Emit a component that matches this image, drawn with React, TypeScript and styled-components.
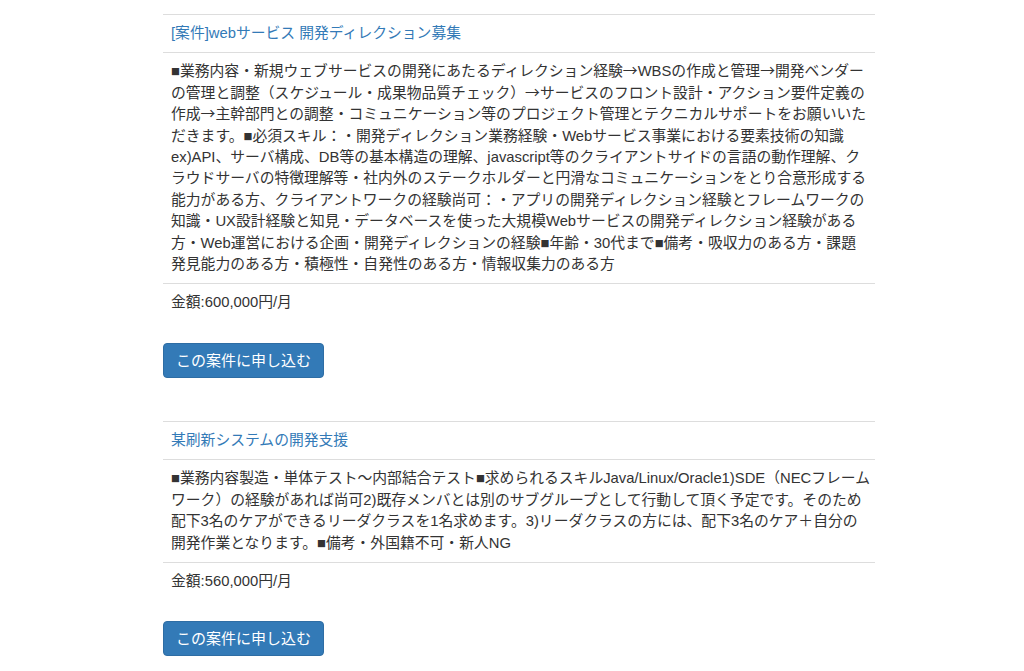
import React from "react";
import styled, { createGlobalStyle } from "styled-components";

const GlobalStyle = createGlobalStyle`
  body {
    margin: 0;
    background: #fff;
    color: #333;
    font-family: "Liberation Sans", "Noto Sans CJK JP", sans-serif;
    font-size: 14.8px;
    line-height: 21.4px;
    text-autospace: no-autospace;
  }
`;

const Page = styled.div`
  padding: 14px 149px 0 163px;
`;

const JobTable = styled.div`
  display: flex;
  flex-direction: column;
  border-top: 1px solid #ddd;
`;

const Cell = styled.div<{ $last?: boolean; $nowrap?: boolean }>`
  padding: 8px;
  border-bottom: ${p => (p.$last ? "0" : "1px solid #ddd")};
  white-space: ${p => (p.$nowrap ? "nowrap" : "normal")};
`;

const TitleLink = styled.a`
  color: #337ab7;
  text-decoration: none;
`;

const Arrow = styled.span`
  font-family: "Noto Sans CJK JP", sans-serif;
  line-height: 0;
`;

const ApplyButton = styled.button`
  margin: 21px 0 43px;
  padding: 6px 12px;
  font-family: inherit;
  font-size: 15px;
  line-height: 21px;
  color: #fff;
  background: #337ab7;
  border: 1px solid #2e6da4;
  border-radius: 4px;
  cursor: pointer;
`;

interface IJob {
  id: number;
  title: string;
  lines: string[];
  price: string;
}

const jobs: IJob[] = [
  {
    id: 1,
    title: "[案件]webサービス 開発ディレクション募集",
    lines: [
      "■業務内容・新規ウェブサービスの開発にあたるディレクション経験→WBSの作成と管理→開発ベンダー",
      "の管理と調整（スケジュール・成果物品質チェック）→サービスのフロント設計・アクション要件定義の",
      "作成→主幹部門との調整・コミュニケーション等のプロジェクト管理とテクニカルサポートをお願いいた",
      "だきます。■必須スキル：・開発ディレクション業務経験・Webサービス事業における要素技術の知識",
      "ex)API、サーバ構成、DB等の基本構造の理解、javascript等のクライアントサイドの言語の動作理解、ク",
      "ラウドサーバの特徴理解等・社内外のステークホルダーと円滑なコミュニケーションをとり合意形成する",
      "能力がある方、クライアントワークの経験尚可：・アプリの開発ディレクション経験とフレームワークの",
      "知識・UX設計経験と知見・データベースを使った大規模Webサービスの開発ディレクション経験がある",
      "方・Web運営における企画・開発ディレクションの経験■年齢・30代まで■備考・吸収力のある方・課題",
      "発見能力のある方・積極性・自発性のある方・情報収集力のある方",
    ],
    price: "金額:600,000円/月",
  },
  {
    id: 2,
    title: "某刷新システムの開発支援",
    lines: [
      "■業務内容製造・単体テスト〜内部結合テスト■求められるスキルJava/Linux/Oracle1)SDE（NECフレーム",
      "ワーク）の経験があれば尚可2)既存メンバとは別のサブグループとして行動して頂く予定です。そのため",
      "配下3名のケアができるリーダクラスを1名求めます。3)リーダクラスの方には、配下3名のケア＋自分の",
      "開発作業となります。■備考・外国籍不可・新人NG",
    ],
    price: "金額:560,000円/月",
  },
];

const Line: React.FC<{ text: string }> = ({ text }) => (
  <>
    {text.split("→").map((part, i) => (
      <React.Fragment key={i}>
        {i > 0 && <Arrow>→</Arrow>}
        {part}
      </React.Fragment>
    ))}
  </>
);

const App: React.FC = () => {
  return (
    <Page>
      <GlobalStyle />
      {jobs.map(job => (
        <div key={job.id}>
          <JobTable>
            <Cell>
              <TitleLink href="#">{job.title}</TitleLink>
            </Cell>
            <Cell $nowrap>
              {job.lines.map((line, i) => (
                <React.Fragment key={i}>
                  {i > 0 && <br />}
                  <Line text={line} />
                </React.Fragment>
              ))}
            </Cell>
            <Cell $last>{job.price}</Cell>
          </JobTable>
          <ApplyButton>この案件に申し込む</ApplyButton>
        </div>
      ))}
    </Page>
  );
};

export default App;
